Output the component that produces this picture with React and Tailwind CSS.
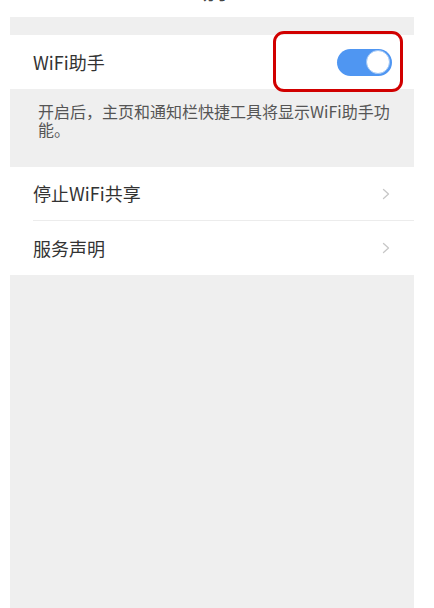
import React from 'react';

const font = { fontFamily: '"Noto Sans CJK SC", "Liberation Sans", sans-serif' };

const Chevron = () => (
  <svg width="8" height="12" viewBox="0 0 8 12" fill="none" stroke="#c7c7c7" strokeWidth="1.3" strokeLinecap="round" strokeLinejoin="round">
    <path d="M1.5 1.5 L6.5 6 L1.5 10.5" />
  </svg>
);

const Toggle = ({ on }) => (
  <div className={`w-[55px] h-[27px] rounded-full flex items-center px-[2px] ${on ? 'bg-[#4f96f2] justify-end' : 'bg-gray-300 justify-start'}`}>
    <div className="w-[24px] h-[24px] rounded-full bg-white border border-[#9cc4f5]"></div>
  </div>
);

const LinkRow = ({ label, divider }) => (
  <div className="bg-white pl-[23px]">
    <div className={`h-[54px] flex items-center justify-between pr-[24px] ${divider ? 'border-b border-[#ececec]' : ''}`}>
      <span className="text-[18px] text-[#333]">{label}</span>
      <Chevron />
    </div>
  </div>
);

export default function App() {
  return (
    <div className="w-[434px] h-[608px] bg-white px-[10px] overflow-hidden" style={font}>
      <div className="w-[404px] h-full bg-[#efefef] flex flex-col">
        {/* header, scrolled mostly out of view */}
        <div className="h-[17px] bg-white overflow-hidden">
          <div className="-mt-[20px] h-[24px] flex items-center text-[18px] leading-[24px] text-[#444]">
            <span className="ml-[28px]">‹</span>
            <span className="ml-[118px]">WiFi助手</span>
          </div>
        </div>
        <div className="h-[18px]"></div>

        <div className="relative">
          <div className="bg-white h-[54px] flex items-center justify-between pl-[23px] pr-[22px]">
            <span className="text-[18px] text-[#333]">WiFi助手</span>
            <Toggle on />
          </div>
          <div className="absolute left-[263px] top-[-4px] w-[130px] h-[61px] border-[3.5px] border-[#d10000] rounded-[11px]"></div>
        </div>

        <div className="h-[78px] pl-[28px] pr-[18px] pt-[13px]">
          <p className="text-[16px] leading-[18px] text-[#555]">开启后，主页和通知栏快捷工具将显示WiFi助手功能。</p>
        </div>

        <LinkRow label="停止WiFi共享" divider />
        <LinkRow label="服务声明" />
      </div>
    </div>
  );
}
